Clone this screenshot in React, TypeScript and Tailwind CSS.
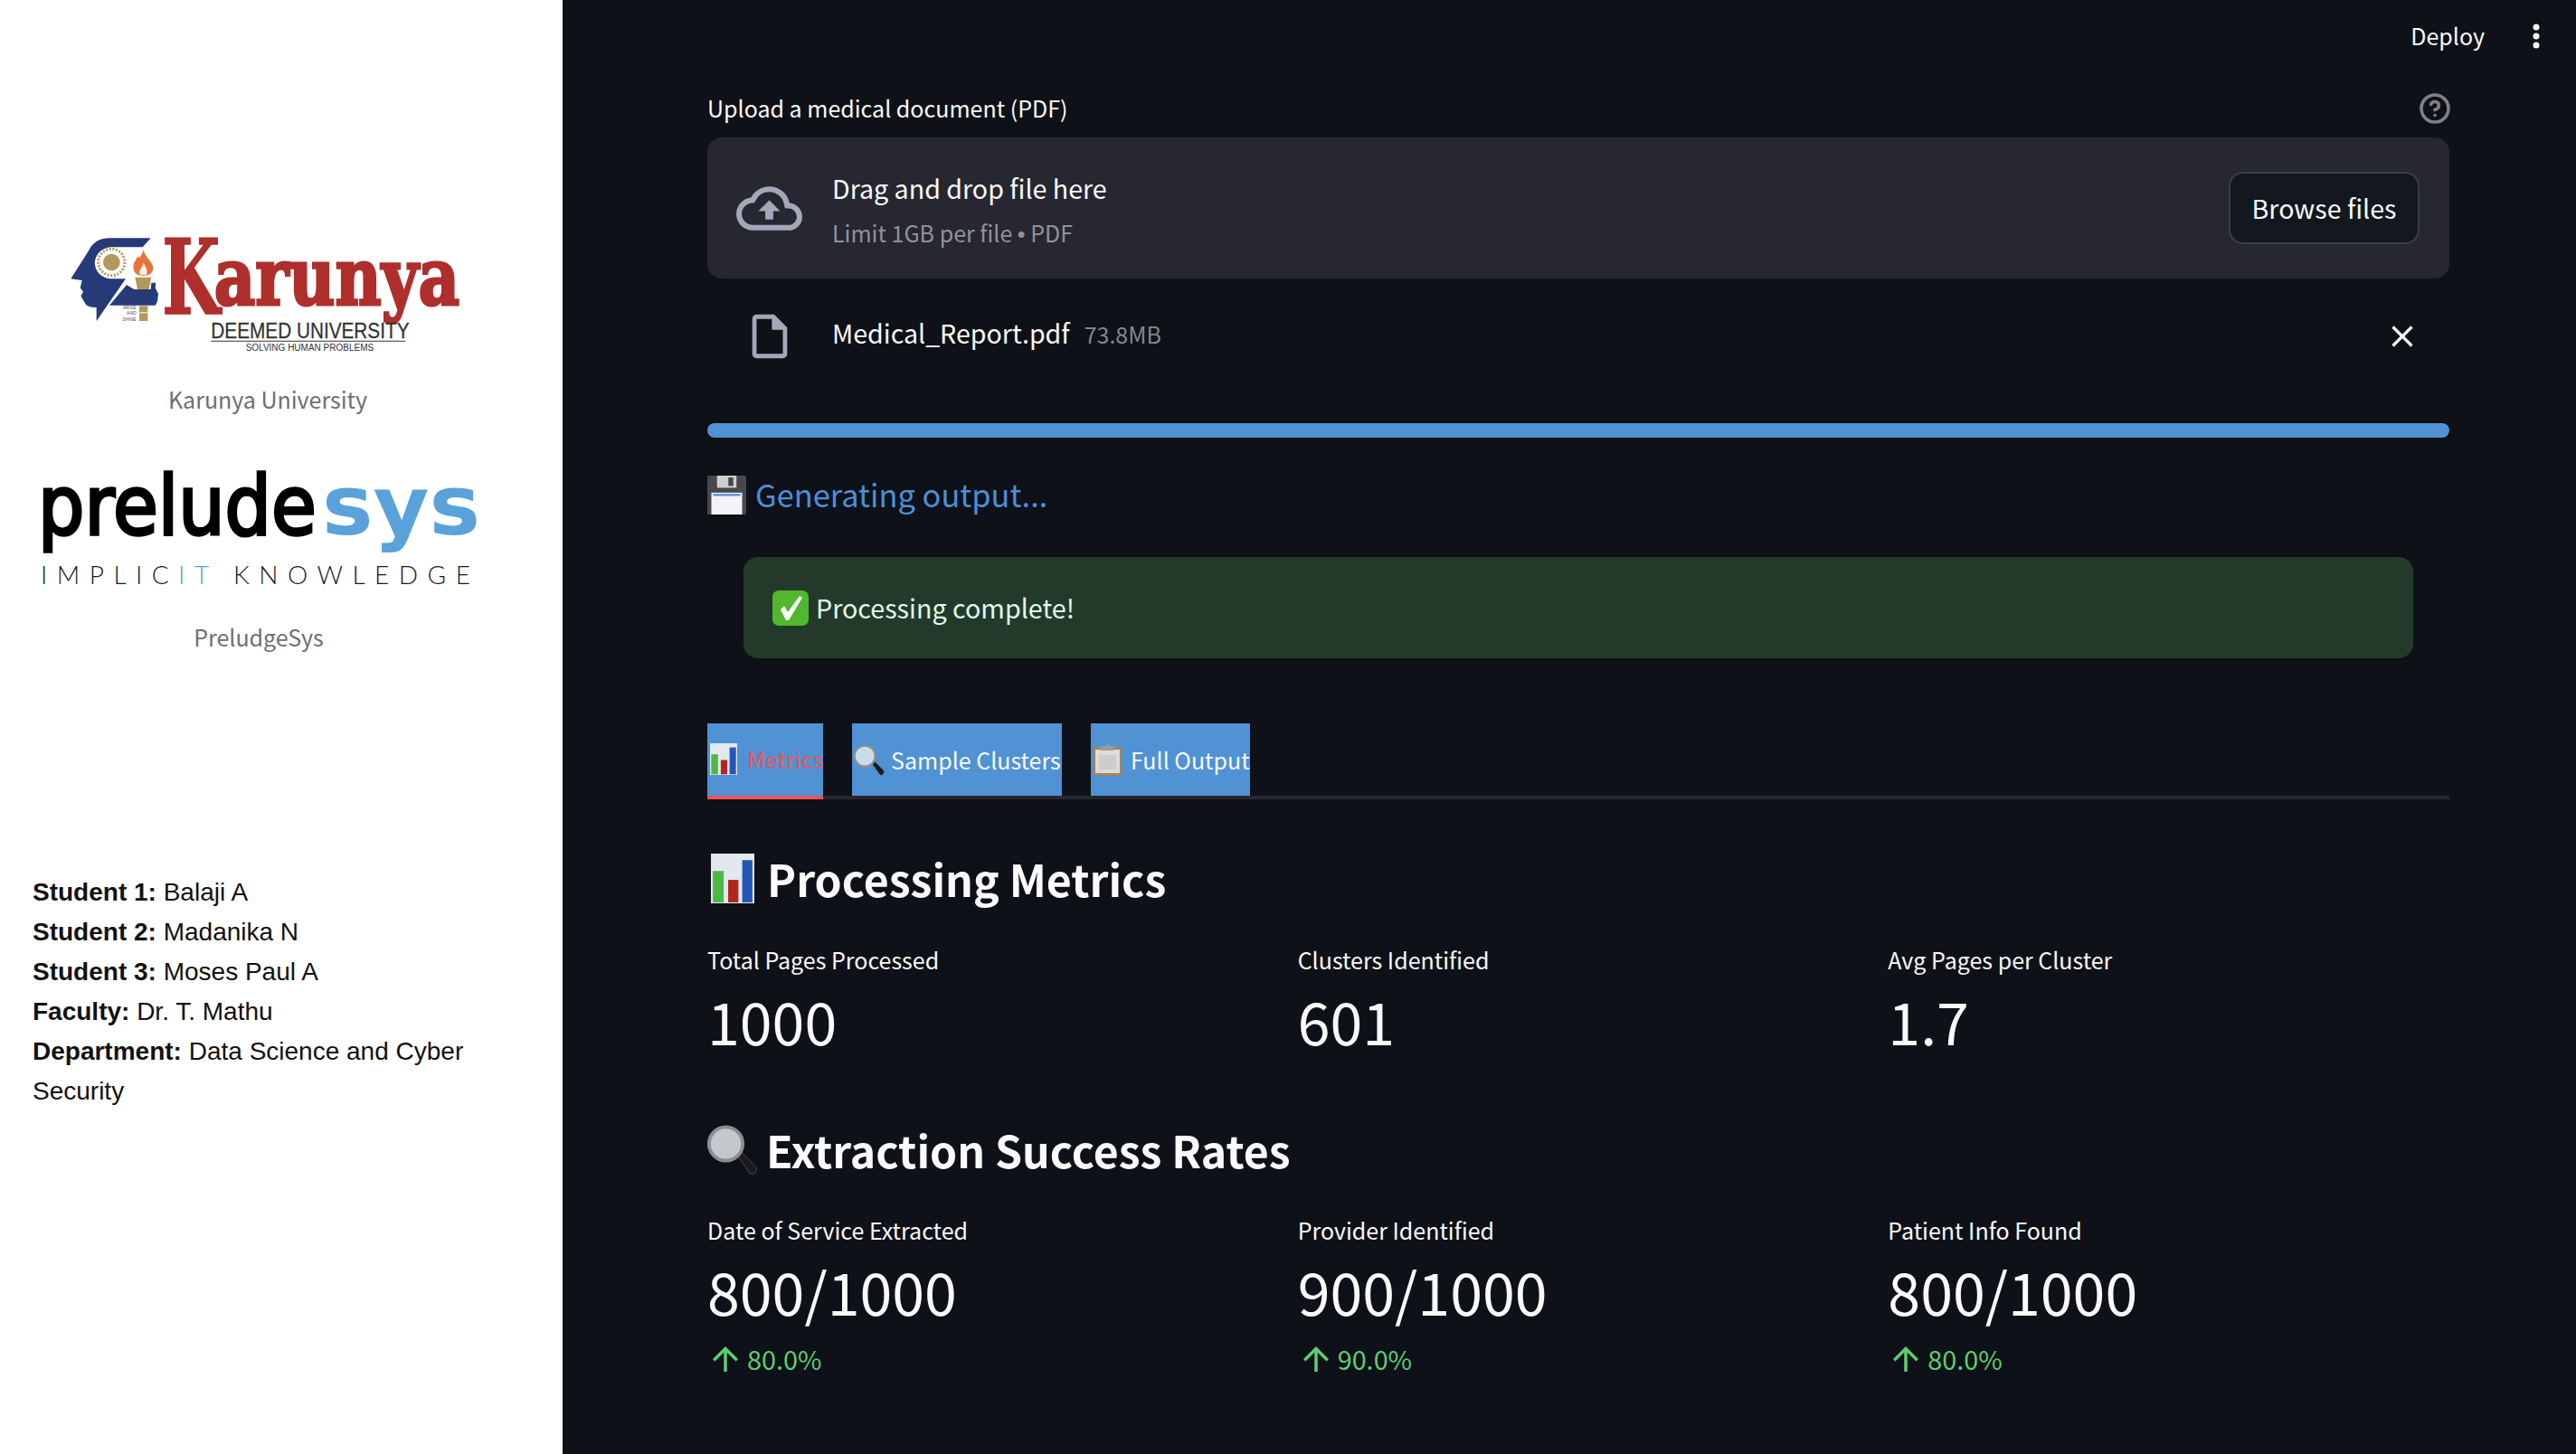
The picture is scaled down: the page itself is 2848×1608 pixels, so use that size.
import React from 'react';
import { CircleHelp } from 'lucide-react';

const serif = 'DejaVu Serif';
const sans = 'Liberation Sans';

function BarChartEmoji({ className }: { className: string }) {
  return (
    <svg className={className} viewBox="0 0 68 106" preserveAspectRatio="none">
      <rect width="68" height="106" fill="#e3e8ee" />
      <rect x="3" y="37" width="17" height="67" fill="#4cb944" />
      <rect x="27" y="56" width="16" height="48" fill="#b3261e" />
      <rect x="49" y="14" width="16" height="90" fill="#2456b8" />
    </svg>
  );
}

function FloppyEmoji() {
  return (
    <svg className="w-[43px] h-[43px] shrink-0" viewBox="0 0 96 128" preserveAspectRatio="none">
      <rect width="96" height="128" rx="3" fill="#48484c" />
      <rect x="24" y="0" width="48" height="40" fill="#cfcfd0" />
      <rect x="52" y="6" width="12" height="28" fill="#444448" />
      <rect x="10" y="56" width="76" height="72" fill="#f4f4f6" />
      <rect x="14" y="60" width="68" height="7" fill="#5b8fd8" />
    </svg>
  );
}

function CheckEmoji() {
  return (
    <svg className="w-[40px] h-[39px] shrink-0" viewBox="0 0 40 39">
      <rect width="40" height="39" rx="7" fill="#52b62f" />
      <path d="M9 21 L13 17 L17 24 L30 6 L33 8 L18 33 L15 33 Z" fill="#ffffff" />
    </svg>
  );
}

function MagnifierEmoji({ className, lens }: { className: string; lens: string }) {
  return (
    <svg className={className} viewBox="0 0 36 36">
      <path d="M21 21 L24 19 L35 30 Q36 33 33 35 L31 35 Z" fill="#1a1a1c" stroke="#5a5a5e" strokeWidth="0.5" />
      <circle cx="13.5" cy="13.5" r="12" fill={lens} stroke="#8b8d90" strokeWidth="2.5" />
    </svg>
  );
}

function ClipboardEmoji() {
  return (
    <svg className="w-[31px] h-[35px] shrink-0" viewBox="0 0 31 35">
      <rect y="3" width="31" height="32" rx="2" fill="#a9825a" />
      <rect x="2" y="6" width="27" height="26" fill="#dcdcdc" />
      <rect x="8" y="2" width="15" height="5" fill="#9a9a9a" />
      <circle cx="15.5" cy="2" r="2" fill="#9a9a9a" />
      <rect x="6" y="12" width="19" height="16" fill="#cdcdcd" />
    </svg>
  );
}

function KarunyaLogo() {
  return (
    <svg className="w-[480px] h-[160px] ml-[60px] shrink-0 overflow-visible" viewBox="0 0 1440 480">
      <path
        d="M320 70 L185 70 Q135 70 115 110 L55 205 L92 210 L86 235 L96 248 L88 262 L100 282 Q105 300 140 300 L140 345 L237 205 L190 205 A55 52 0 0 1 190 100 L293 100 Z"
        fill="#263a78"
      />
      <path
        d="M183 293 L240 225 L265 240 L320 240 L322 218 L337 218 L335 235 L345 255 L342 280 L335 293 Z"
        fill="#263a78"
      />
      <circle cx="190" cy="150" r="44" fill="none" stroke="#b39a5b" strokeWidth="9" strokeDasharray="6 5" />
      <circle cx="190" cy="150" r="28" fill="#b39a5b" />
      <path
        d="M296 108 C300 135 330 150 328 172 C326 188 312 195 295 195 C275 195 262 185 262 165 C262 150 272 145 276 130 C282 140 290 130 296 108 Z"
        fill="#e8743b"
      />
      <path d="M296 150 C300 165 312 172 306 192 L285 192 C278 175 292 170 296 150 Z" fill="#fbeee2" />
      <path d="M268 200 L322 200 L314 240 L276 240 Z" fill="#b39a5b" />
      <rect x="282" y="295" width="28" height="50" fill="#b39a5b" />
      <rect x="282" y="316" width="28" height="3" fill="#ffffff" />
      <text x="272" y="306" textAnchor="end" fontFamily={sans} fontSize="15" fill="#555555">ARISE</text>
      <text x="272" y="325" textAnchor="end" fontFamily={sans} fontSize="15" fill="#555555">AND</text>
      <text x="272" y="344" textAnchor="end" fontFamily={sans} fontSize="15" fill="#555555">SHINE</text>
      <text transform="translate(358 320) scale(0.65 1)" fontFamily={serif} fontWeight="700" fontSize="340" fill="#ae2f2c" stroke="#ae2f2c" strokeWidth="5">K</text>
      <text transform="translate(530 290) scale(0.8 1)" fontFamily={serif} fontWeight="700" fontSize="264" fill="#ae2f2c" stroke="#ae2f2c" strokeWidth="9">arunya</text>
      <text transform="translate(520 403) scale(0.89 1)" fontFamily={sans} fontSize="70" fill="#333333" stroke="#333333" strokeWidth="0.8">DEEMED UNIVERSITY</text>
      <rect x="520" y="410" width="645" height="4" fill="#666666" />
      <text x="635" y="445" fontFamily={sans} fontSize="30" fill="#333333">SOLVING HUMAN PROBLEMS</text>
    </svg>
  );
}

function PreludeLogo() {
  return (
    <svg className="w-[540px] h-[160px] ml-[20px] mt-[53px] shrink-0 overflow-visible" viewBox="0 0 540 160">
      <text transform="translate(22 81) scale(0.89 1)" fontFamily="DejaVu Sans" fontSize="91" fill="#000000" stroke="#000000" strokeWidth="3.5">prelude</text>
      <text transform="translate(336 81) scale(1.044 1)" fontFamily="DejaVu Sans" fontWeight="700" fontSize="91" fill="#5aa2d9">sys</text>
      <text y="136" fontFamily="Lato" fontWeight="300" fontSize="28" letterSpacing="10.5" fill="#1a1a1a">
        <tspan x="25">IMPLIC</tspan>
        <tspan x="177" fill="#5aa2d9">IT</tspan>
        <tspan x="238">KNOWLEDGE</tspan>
      </text>
    </svg>
  );
}

const credits = [
  { label: 'Student 1:', value: 'Balaji A' },
  { label: 'Student 2:', value: 'Madanika N' },
  { label: 'Student 3:', value: 'Moses Paul A' },
  { label: 'Faculty:', value: 'Dr. T. Mathu' },
  { label: 'Department:', value: 'Data Science and Cyber Security' },
];

function Sidebar() {
  return (
    <aside className="w-[622px] shrink-0 bg-white flex flex-col pt-[240px]">
      <KarunyaLogo />
      <p className="w-[592px] mt-[25px] text-center text-[25px] leading-[32px] text-[#6d6e76]">Karunya University</p>
      <PreludeLogo />
      <p className="w-[572px] mt-[18px] text-center text-[25px] leading-[32px] text-[#6d6e76]">PreludgeSys</p>
      <div className="mt-[245px] ml-[36px] w-[520px] font-['Liberation_Sans',sans-serif] text-[28px] leading-[44px] text-[#111111]">
        {credits.map(c => (
          <p key={c.label}>
            <b className="font-bold">{c.label}</b> {c.value}
          </p>
        ))}
      </div>
    </aside>
  );
}

function Dropzone() {
  return (
    <div className="mt-[16px] h-[156px] rounded-[16px] bg-[#262730] flex items-center pl-[32px] pr-[33px]">
      <svg className="w-[73px] h-[73px] shrink-0" viewBox="0 0 24 24" fill="#a3a8b8">
        <path d="M19.35 10.04A7.49 7.49 0 0 0 12 4C9.11 4 6.6 5.64 5.35 8.04A5.994 5.994 0 0 0 0 14c0 3.31 2.69 6 6 6h13c2.76 0 5-2.24 5-5 0-2.64-2.05-4.78-4.65-4.96zM19 18H6c-2.21 0-4-1.79-4-4 0-2.05 1.53-3.76 3.56-3.97l1.07-.11.5-.95A5.469 5.469 0 0 1 12 6c2.62 0 4.88 1.86 5.39 4.43l.3 1.5 1.53.11A2.98 2.98 0 0 1 22 15c0 1.65-1.35 3-3 3zM8 13h2.55v3h2.9v-3H16l-4-4z" />
      </svg>
      <div className="ml-[33px] flex-1 pt-[6px]">
        <p className="text-[28.6px] leading-[40px] text-[#fafafa]">Drag and drop file here</p>
        <p className="mt-[9px] text-[25px] leading-[40px] text-[#92939a]">
          Limit 1GB per file <span className="font-['Liberation_Sans',sans-serif]">•</span> PDF
        </p>
      </div>
      <button className="w-[211px] h-[80px] rounded-[16px] border-2 border-[#3c3e47] bg-[#13171f] text-[28.6px] leading-[40px] text-[#fafafa]">
        Browse files
      </button>
    </div>
  );
}

function FileRow() {
  return (
    <div className="h-[128px] flex items-center pl-[40px] pr-[32px]">
      <svg className="w-[58px] h-[58px] shrink-0" viewBox="0 0 24 24" fill="#a3a8b8">
        <path d="M14 2H6c-1.1 0-1.99.9-1.99 2L4 20c0 1.1.89 2 1.99 2H18c1.1 0 2-.9 2-2V8l-6-6zM6 20V4h7v5h5v11H6z" />
      </svg>
      <div className="ml-[40px] flex-1 flex items-baseline -mt-[8px]">
        <span className="text-[28.6px] leading-[40px] text-[#fafafa]">Medical_Report.pdf</span>
        <span className="ml-[16px] text-[25px] leading-[40px] text-[#85868d]">73.8MB</span>
      </div>
      <svg className="w-[40px] h-[40px] shrink-0" viewBox="0 0 24 24" fill="#fafafa">
        <path d="M19 6.41L17.59 5 12 10.59 6.41 5 5 6.41 10.59 12 5 17.59 6.41 19 12 13.41 17.59 19 19 17.59 13.41 12z" />
      </svg>
    </div>
  );
}

function Tabs() {
  return (
    <div className="mt-[72px] flex gap-[32px] border-b-4 border-[#262730] h-[84px]">
      <div className="w-[128px] h-[84px] bg-[#5092d4] border-b-4 border-[#ee5555] flex items-center pl-[3px] pb-[2px]">
        <BarChartEmoji className="w-[30px] h-[35px] shrink-0" />
        <span className="ml-[11px] text-[25px] leading-[36px] text-[#ee5555]">Metrics</span>
      </div>
      <div className="w-[232px] h-[80px] bg-[#5092d4] flex items-center pl-[1px]">
        <MagnifierEmoji className="w-[35px] h-[35px] shrink-0" lens="#c9dcec" />
        <span className="ml-[7px] text-[25px] leading-[36px] text-[#fafafa] whitespace-nowrap">Sample Clusters</span>
      </div>
      <div className="w-[176px] h-[80px] bg-[#5092d4] flex items-center pl-[3px]">
        <ClipboardEmoji />
        <span className="ml-[10px] text-[25px] leading-[36px] text-[#fafafa] whitespace-nowrap">Full Output</span>
      </div>
    </div>
  );
}

function Metric({ label, value, delta }: { label: string; value: string; delta?: string }) {
  return (
    <div>
      <p className="text-[25px] leading-[32px] text-[#fafafa]">{label}</p>
      <p className="mt-[11px] text-[64.5px] leading-[80px] text-[#fafafa]">{value}</p>
      {delta && (
        <div className="mt-[20px] h-[32px] flex items-center text-[#5bce73]">
          <svg className="w-[42px] h-[42px] shrink-0 -ml-[1px]" viewBox="0 0 24 24" fill="currentColor">
            <path d="M4 12l1.41 1.41L11 7.83V20h2V7.83l5.58 5.59L20 12l-8-8-8 8z" />
          </svg>
          <span className="ml-[3px] text-[28.8px] leading-[32px]">{delta}</span>
        </div>
      )}
    </div>
  );
}

export default function App() {
  return (
    <div className="h-screen overflow-hidden flex bg-[#0e1117] font-['Noto_Sans_CJK_SC',sans-serif]">
      <Sidebar />
      <main className="flex-1 flex flex-col">
        <header className="h-[80px] flex items-center justify-end gap-[53px] pr-[40px]">
          <span className="text-[25px] leading-[32px] text-[#fafafa] -mt-[2px]">Deploy</span>
          <svg className="w-[8px] h-[28px]" viewBox="0 0 8 28" fill="#fafafa">
            <circle cx="4" cy="4" r="3.5" />
            <circle cx="4" cy="14" r="3.5" />
            <circle cx="4" cy="24" r="3.5" />
          </svg>
        </header>
        <div className="ml-[160px] mr-[140px]">
          <div className="mt-[24px] h-[32px] flex items-center justify-between">
            <span className="text-[25px] leading-[32px] text-[#fafafa] -mt-[2px]">Upload a medical document (PDF)</span>
            <CircleHelp size={36} strokeWidth={2.4} className="text-[#808186] -mr-[2px]" />
          </div>
          <Dropzone />
          <FileRow />
          <div className="mt-[32px] h-[16px] rounded-full bg-[#5092d4]" />
          <div className="mt-[31px] h-[64px] flex items-center gap-[10px]">
            <FloppyEmoji />
            <span className="text-[34.4px] leading-[48px] text-[#4a90d9] -mt-[3px]">Generating output...</span>
          </div>
          <div className="mt-[37px] mx-[40px] h-[112px] rounded-[16px] bg-[#233a2b] flex items-center pl-[32px] gap-[8px]">
            <CheckEmoji />
            <span className="text-[28.7px] leading-[40px] text-[#dffde9]">Processing complete!</span>
          </div>
          <Tabs />
          <div className="mt-[47px] h-[80px] flex items-center pl-[4px] gap-[14px]">
            <BarChartEmoji className="w-[48px] h-[55px] shrink-0" />
            <h2 className="text-[48.2px] leading-[80px] font-semibold text-[#fafafa]">Processing Metrics</h2>
          </div>
          <div className="mt-[34px] grid grid-cols-3 gap-[32px]">
            <Metric label="Total Pages Processed" value="1000" />
            <Metric label="Clusters Identified" value="601" />
            <Metric label="Avg Pages per Cluster" value="1.7" />
          </div>
          <div className="mt-[64px] h-[80px] flex items-center -ml-[1px] gap-[9px]">
            <MagnifierEmoji className="w-[57px] h-[56px] shrink-0" lens="#c4c7cb" />
            <h2 className="text-[48.2px] leading-[80px] font-semibold text-[#fafafa] -mt-[2px]">Extraction Success Rates</h2>
          </div>
          <div className="mt-[32px] grid grid-cols-3 gap-[32px]">
            <Metric label="Date of Service Extracted" value="800/1000" delta="80.0%" />
            <Metric label="Provider Identified" value="900/1000" delta="90.0%" />
            <Metric label="Patient Info Found" value="800/1000" delta="80.0%" />
          </div>
        </div>
      </main>
    </div>
  );
}
